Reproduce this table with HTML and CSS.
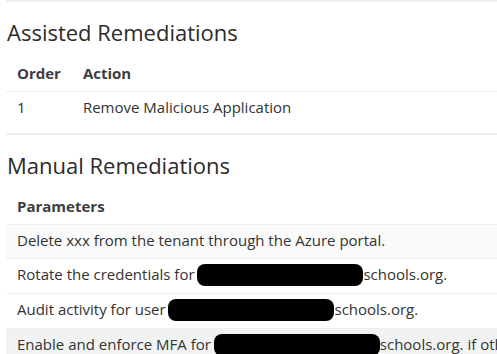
FILE: index.html
```html
<!DOCTYPE html>
<html>
<head>
<meta charset="utf-8">
<link rel="stylesheet" href="styles.css">
</head>
<body>
<div class="page">
  <section class="section">
    <h2 class="title">Assisted Remediations</h2>
    <table class="table">
      <thead>
        <tr><th class="col-order">Order</th><th>Action</th></tr>
      </thead>
      <tbody>
        <tr><td class="col-order">1</td><td>Remove Malicious Application</td></tr>
      </tbody>
    </table>
  </section>
  <section class="section">
    <h2 class="title">Manual Remediations</h2>
    <table class="table">
      <thead>
        <tr><th>Parameters</th></tr>
      </thead>
      <tbody>
        <tr class="striped"><td>Delete xxx from the tenant through the Azure portal.</td></tr>
        <tr><td>Rotate the credentials for <span class="redact"></span>schools.org.</td></tr>
        <tr><td>Audit activity for user <span class="redact"></span>schools.org.</td></tr>
        <tr class="hover"><td>Enable and enforce MFA for <span class="redact"></span>schools.org. if other accounts are affected.</td></tr>
      </tbody>
    </table>
  </section>
</div>
</body>
</html>
```

FILE: styles.css
```css
html, body {
  margin: 0;
  padding: 0;
  overflow: hidden;
  background: #ffffff;
}
body {
  font-family: "Open Sans", "Liberation Sans", sans-serif;
  color: #363636;
  width: 497px;
  height: 354px;
}
.page {
  padding-left: 6px;
}
.section {
  border-top: 2px solid #eff1f1;
  padding-top: 15px;
  padding-bottom: 8px;
}
.title {
  margin: 0 0 11px 1px;
  font-size: 22px;
  line-height: 30px;
  font-weight: 400;
  color: #2b2b2b;
}
.table {
  border-collapse: collapse;
  width: 100%;
  white-space: nowrap;
  font-size: 15px;
  line-height: 21px;
}
.table th {
  text-align: left;
  font-weight: 700;
  color: #3c3c44;
  padding: 5px 11px 7px;
  border-bottom: 1px solid #eceeee;
}
.table td {
  padding: 5px 11px 7px;
  border-bottom: 1px solid #eceeee;
  color: #333333;
}
.table tbody tr:last-child td {
  border-bottom: 0;
}
.col-order {
  width: 43px;
}
.striped td {
  background: #fafafa;
}
.hover td {
  background: #f1f3f3;
}
.redact {
  display: inline-block;
  width: 166px;
  height: 22px;
  margin: 0 0 0 -1px;
  background: #000;
  border-radius: 8px;
  vertical-align: -6px;
}
```
